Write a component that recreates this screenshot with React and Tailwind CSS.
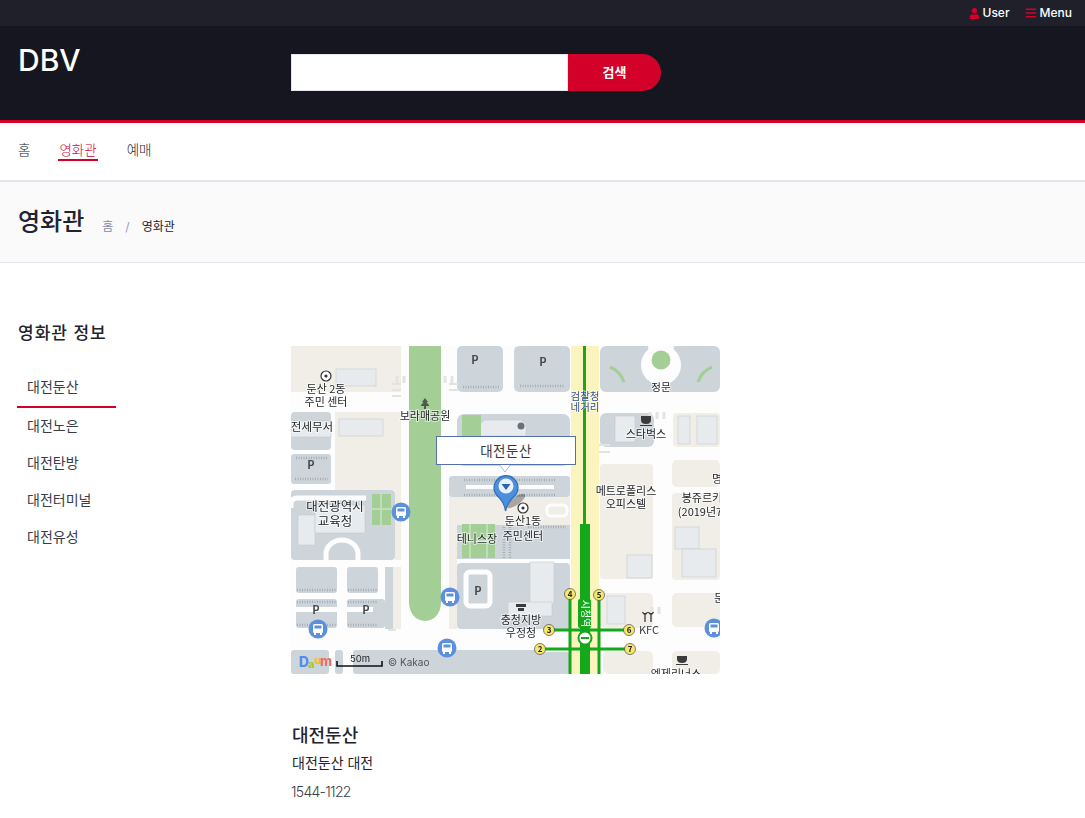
import React from "react";
import { FaUser, FaBars } from "react-icons/fa";

const beige = "#f1eee8";
const grey = "#cdd4da";
const lightGrey = "#e8ebee";
const road = "#fdfdfd";
const green = "#a3cf96";
const line = "#12a81c";

// [x, y, w, h, fill, rx]
const blocks = [
  // top row
  [291, 346, 110, 46, beige, 0],
  [457, 346, 46, 46, grey, 5],
  [514, 346, 56, 46, grey, 5],
  [600, 346, 120, 46, grey, 6],
  // left column
  [291, 412, 40, 38, grey, 4],
  [335, 412, 66, 78, beige, 0],
  [291, 454, 40, 30, grey, 3],
  [291, 490, 104, 70, grey, 4],
  [395, 490, 6, 70, beige, 0],
  [296, 567, 41, 26, grey, 3],
  [347, 567, 31, 26, grey, 3],
  [385, 567, 8, 62, grey, 0],
  [393, 567, 8, 62, beige, 0],
  [296, 599, 41, 29, grey, 3],
  [347, 599, 38, 29, grey, 3],
  [291, 650, 38, 24, grey, 3],
  [335, 650, 8, 24, grey, 3],
  [353, 650, 190, 24, grey, 3],
  // center
  [457, 414, 113, 52, grey, 7],
  [449, 476, 121, 21, grey, 3],
  [449, 497, 121, 28, beige, 0],
  [449, 525, 8, 104, beige, 0],
  [457, 525, 113, 34, grey, 0],
  [457, 563, 113, 66, grey, 4],
  // right blocks
  [600, 413, 54, 34, grey, 6],
  [673, 413, 47, 34, beige, 4],
  [600, 464, 53, 115, beige, 3],
  [672, 460, 48, 27, beige, 5],
  [672, 493, 48, 87, beige, 4],
  [600, 593, 53, 35, beige, 5],
  [672, 593, 48, 34, beige, 5],
  [603, 651, 50, 23, beige, 5],
  [672, 651, 48, 23, beige, 5],
  [521, 652, 49, 22, grey, 4],
];

// [x, y, w, h]
const lightRects = [
  [336, 369, 40, 17],
  [339, 419, 44, 17],
  [291, 421, 40, 16],
  [627, 555, 25, 23],
  [615, 416, 20, 26],
  [678, 416, 12, 28],
  [697, 416, 20, 28],
  [675, 527, 24, 22],
  [682, 549, 34, 28],
  [607, 596, 18, 28],
  [530, 562, 24, 42],
  [508, 602, 44, 14],
  [298, 515, 17, 30],
  [315, 505, 50, 28],
];

// dashed parking edges, [x1, y1, x2, y2]
const lotEdges = [
  [463, 387, 499, 387],
  [520, 386, 564, 386],
  [295, 479, 328, 479],
  [296, 458, 328, 458],
  [297, 590, 336, 590],
  [348, 590, 377, 590],
  [297, 602, 336, 602],
  [348, 602, 377, 602],
  [297, 625, 336, 625],
  [348, 625, 377, 625],
  [464, 480, 556, 480],
  [464, 495, 556, 495],
  [504, 527, 504, 558],
  [510, 527, 510, 558],
  [528, 527, 566, 527],
];

// [text, x, y, size]
const labels = [
  ["둔산 2동", 326, 393, 11],
  ["주민 센터", 326, 406, 11],
  ["보라매공원", 425, 420, 11],
  ["전세무서", 312, 431, 11.5],
  ["스타벅스", 646, 438, 11],
  ["정문", 661, 391, 10.5],
  ["메트로폴리스", 626, 495, 11],
  ["오피스텔", 626, 508, 11],
  ["봉쥬르키", 702, 502, 11],
  ["(2019년7", 700, 516, 11],
  ["대전광역시", 335, 511, 12.5],
  ["교육청", 335, 526, 12.5],
  ["테니스장", 477, 543, 11],
  ["둔산1동", 523, 525, 11],
  ["주민센터", 523, 540, 11],
  ["충청지방", 521, 624, 11],
  ["우정청", 521, 637, 11],
  ["엠제리너스", 676, 678, 11],
  ["명", 717, 483, 11],
  ["둔", 719, 602, 11],
];

const buses = [
  [401, 512],
  [318, 629],
  [450, 597],
  [447, 648],
  [714, 628],
];

const stops = [
  ["4", 570, 594],
  ["5", 599, 595],
  ["3", 549, 630],
  ["6", 629, 630],
  ["2", 540, 649],
  ["7", 630, 649],
];

const parking = [
  [475, 360],
  [543, 362],
  [311, 465],
  [316, 610],
  [366, 610],
  [478, 591],
];

const MapView = () => (
  <svg
    width="429"
    height="328"
    viewBox="291 346 429 328"
    className="block font-['Noto_Sans_CJK_KR',sans-serif]"
  >
    <defs>
      <filter id="tile" x="0" y="0" width="100%" height="100%">
        <feGaussianBlur stdDeviation="0.4" />
      </filter>
    </defs>
    <rect x="291" y="346" width="429" height="328" fill={road} />
    <g filter="url(#tile)">
      {blocks.map(([x, y, w, h, fill, rx], index) => (
        <rect key={index} x={x} y={y} width={w} height={h} fill={fill} rx={rx} />
      ))}
      {lightRects.map(([x, y, w, h], index) => (
        <rect
          key={index}
          x={x}
          y={y}
          width={w}
          height={h}
          fill={lightGrey}
          stroke="#c4c9cd"
          strokeWidth="0.6"
        />
      ))}
      {lotEdges.map(([x1, y1, x2, y2], index) => (
        <line
          key={index}
          x1={x1}
          y1={y1}
          x2={x2}
          y2={y2}
          stroke="#a5adb5"
          strokeWidth="2.5"
          strokeDasharray="1 1.5"
        />
      ))}

      {/* white paths cut into the blocks */}
      <path d="M291 508 v-4 q0 -6 7 -6 h68" fill="none" stroke={road} strokeWidth="5" />
      <path d="M326 560 v-6 a16 14 0 0 1 32 0 v6" fill={grey} stroke={road} strokeWidth="5" />
      <rect x="291" y="607" width="46" height="5" fill={road} />
      <rect x="347" y="607" width="26" height="5" fill={road} />
      <rect x="466" y="485" width="88" height="4" fill={road} />
      <rect x="547" y="505" width="20" height="11" rx="4" fill={beige} stroke={road} strokeWidth="3" />
      <rect x="466" y="572" width="24" height="34" rx="4" fill={grey} stroke={road} strokeWidth="5" />

      {/* building behind the info window */}
      <path d="M485 420 h36 l5 4 v12 h-46 v-12 z" fill={lightGrey} stroke="#c4c9cd" strokeWidth="0.6" />
      <circle cx="521" cy="426" r="3.5" fill="#6a7076" />

      {/* park and courts */}
      <path d="M409 346 h32 v258 q-2 16 -16 17 q-14 -1 -16 -17 z" fill={green} />
      <rect x="462" y="415" width="19" height="21" fill={green} />
      <rect x="372" y="494" width="19" height="31" fill={green} />
      <rect x="462" y="524" width="33" height="34" fill={green} />
      <path d="M470 524 v34 M487 524 v34 M462 541 h33" stroke="#c9e3c0" strokeWidth="1.5" />
      <path d="M381 494 v31 M372 509 h19" stroke="#c9e3c0" strokeWidth="1.5" />
      <circle cx="661" cy="365" r="20" fill={road} />
      <path d="M648 346 h26 l-6 46 h-14 z" fill={road} />
      <circle cx="661" cy="360" r="9.5" fill={green} />
      <path d="M610 367 q10 4 14 15 M712 367 q-10 4 -14 15" stroke={green} strokeWidth="3" fill="none" />

      {/* crosswalks */}
      <path
        d="M392 384 h9 M392 390 h9 M392 396 h9 M449 384 h9 M449 390 h9 M598 445 h12 M598 452 h12 M388 630 h8"
        stroke="#e3e3e0"
        strokeWidth="2"
      />
      <path
        d="M397 376 v7 M404 376 v7 M445 376 v7 M452 376 v7 M650 412 v7 M657 412 v7 M664 412 v7 M652 607 v7 M659 607 v7"
        stroke="#e3e3e0"
        strokeWidth="3"
      />

      {/* yellow road and subway */}
      <rect x="571" y="346" width="28" height="328" fill="#fbf5bd" />
      <rect x="583" y="346" width="3" height="180" fill={line} />
      <rect x="580" y="524" width="10" height="150" fill={line} />
      <path
        d="M570 594 V674 M599 595 V674 M549 630 H629 M540 649 H630"
        stroke={line}
        strokeWidth="3"
        fill="none"
      />
      <rect x="578" y="599" width="13" height="29" rx="2" fill={line} />
      <text
        x="584.5"
        y="613.5"
        fontSize="10"
        fill="#fff"
        textAnchor="middle"
        dominantBaseline="middle"
        transform="rotate(90 584.5 613.5)"
      >
        시청역
      </text>
      <circle cx="585" cy="638" r="6.5" fill="#fff" stroke={line} strokeWidth="2" />
      <rect x="581" y="637" width="8" height="2" fill={line} />
      {stops.map(([label, x, y]) => (
        <g key={label}>
          <circle cx={x} cy={y} r="5.5" fill="#f7e76a" stroke="#4a4a4a" strokeWidth="0.7" />
          <text x={x} y={y + 3} fontSize="8" fontWeight="700" textAnchor="middle" fill="#222">
            {label}
          </text>
        </g>
      ))}

      {/* parking letters */}
      {parking.map(([x, y], index) => (
        <text key={index} x={x} y={y + 4} fontSize="11" fontWeight="700" textAnchor="middle" fill="#4a4a4a">
          P
        </text>
      ))}

      {/* poi icons */}
      <circle cx="326" cy="376" r="5" fill="#fff" stroke="#333" strokeWidth="1.2" />
      <circle cx="326" cy="376" r="1.6" fill="#333" />
      <circle cx="523" cy="508" r="5" fill="#fff" stroke="#333" strokeWidth="1.2" />
      <circle cx="523" cy="508" r="1.6" fill="#333" />
      <path d="M425 398 l3 4 h-1.5 l3 4 h-9 l3 -4 h-1.5 z M424 406 h2 v3 h-2 z" fill="#4e5a4e" />
      <path d="M641 416 h10 v4 q0 4 -5 4 q-5 0 -5 -4 z M640 425 h12 v1 h-12 z" fill="#3a3a3a" />
      <path d="M645 613 v9 M651 613 v9 M642.5 612 q2.5 5 5 0 M648.5 612 q2.5 5 5 0" stroke="#3a3a3a" strokeWidth="1.3" fill="none" />
      <path d="M516 604 h10 v3 h-10 z M518 608 h6 v3 h-6 z" fill="#3a3a3a" />
      <path d="M677 656 h10 v3 q0 4 -5 4 q-5 0 -5 -4 z M676 664 h12 v1 h-12 z" fill="#3a3a3a" />

      {labels.map(([label, x, y, size]) => (
        <text
          key={label}
          x={x}
          y={y}
          fontSize={size}
          textAnchor="middle"
          fill="#23272b"
          stroke="#ffffff"
          strokeWidth="2"
          paintOrder="stroke"
          strokeOpacity="0.6"
        >
          {label}
        </text>
      ))}
      <text x="585" y="400" fontSize="10.5" textAnchor="middle" fill="#34509a" stroke="#fff" strokeWidth="1.5" paintOrder="stroke" strokeOpacity="0.6">
        검찰청
      </text>
      <text x="585" y="411" fontSize="10.5" textAnchor="middle" fill="#34509a" stroke="#fff" strokeWidth="1.5" paintOrder="stroke" strokeOpacity="0.6">
        네거리
      </text>
      <text x="649" y="634" fontSize="11" textAnchor="middle" fill="#3a3f44">
        KFC
      </text>

      {/* bus stops */}
      {buses.map(([x, y], index) => (
        <g key={index}>
          <circle cx={x} cy={y} r="9.5" fill="#5c90dc" />
          <rect x={x - 5} y={y - 5} width="10" height="9" rx="1.5" fill="#fff" />
          <rect x={x - 3.5} y={y - 3.5} width="7" height="3" fill="#5c90dc" />
          <rect x={x - 4} y={y + 4} width="2" height="2" fill="#fff" />
          <rect x={x + 2} y={y + 4} width="2" height="2" fill="#fff" />
        </g>
      ))}

      {/* logo and scale */}
      <text x="299" y="667" fontSize="14" fontWeight="800" fill="#4f8ef0" fontFamily="Inter">
        D
      </text>
      <text x="308" y="668" fontSize="11" fontWeight="800" fill="#a5cc1f" fontFamily="Inter">
        a
      </text>
      <text x="314" y="664" fontSize="11" fontWeight="800" fill="#f5bc1d" fontFamily="Inter">
        u
      </text>
      <text x="320" y="666" fontSize="13" fontWeight="800" fill="#ee6d63" fontFamily="Inter">
        m
      </text>
      <path d="M337 661 v5 h45 v-5" stroke="#111" strokeWidth="1.6" fill="none" />
      <text x="360" y="662" fontSize="9.5" textAnchor="middle" fill="#222" fontFamily="Inter">
        50m
      </text>
      <text x="388" y="666" fontSize="10" fill="#555" fontFamily="Inter">
        © Kakao
      </text>

      {/* marker */}
      <ellipse cx="516" cy="501" rx="11" ry="4" fill="#000" opacity="0.3" transform="rotate(-35 516 501)" />
      <path
        d="M505.5 511 q-1 -9 -9 -16 a12 12 0 1 1 19 0 q-8 7 -10 16 z"
        fill="#4b8fdd"
        stroke="#2f6cb8"
        strokeWidth="1.2"
      />
      <circle cx="506" cy="486" r="7.5" fill="#e9f1fb" />
      <path d="M501.5 484 h9 l-4.5 6 z" fill="#2f62ad" />
    </g>

    {/* info window */}
    <path d="M499 464 l6 8 l6 -8 z" fill="#fff" stroke="#8fa8d0" strokeWidth="0.8" />
    <rect x="436.5" y="436.5" width="139" height="28" fill="#fff" stroke="#5470ab" />
    <text x="506" y="456" fontSize="13.5" letterSpacing="0.5" textAnchor="middle" fill="#3a3a3a">
      대전둔산
    </text>
  </svg>
);

const sideItems = ["대전둔산", "대전노은", "대전탄방", "대전터미널", "대전유성"];

const App = () => {
  return (
    <div className="min-h-[818px] bg-white text-[#21232e] font-['Inter','Noto_Sans_CJK_KR',sans-serif]">
      {/* top bar */}
      <div className="h-[26px] bg-[#1f2029] flex items-center justify-end gap-[15px] pr-[13px] text-[12px] font-medium text-white">
        <span className="flex items-center gap-[3px]">
          <FaUser className="text-[#d3002a] text-[11px]" />
          User
        </span>
        <span className="flex items-center gap-[3px]">
          <FaBars className="text-[#d3002a] text-[12px]" />
          Menu
        </span>
      </div>

      {/* header */}
      <div className="h-[97px] bg-[#15161f] border-b-[3px] border-[#d3002a] flex pl-[18px]">
        <div className="w-[273px] pt-[16px] text-[30px] leading-[36px] font-medium text-white">DBV</div>
        <div className="flex h-[37px] mt-[28px]">
          <input className="w-[277px] h-full bg-white border border-[#e5e5ef] outline-none" />
          <button className="w-[93px] h-full bg-[#d3002a] rounded-r-full text-white text-[13px] font-bold">
            검색
          </button>
        </div>
      </div>

      {/* nav */}
      <div className="h-[59px] border-b-2 border-[#e3e4ec] flex gap-[29px] pl-[18px] text-[13.5px] font-light">
        <a className="pt-[17px]">홈</a>
        <a className="mt-[17px] h-[19px] leading-[20px] -mx-px px-px border-b-2 border-[#d3002a] text-[#d3002a] box-content">영화관</a>
        <a className="pt-[17px] ml-px">예매</a>
      </div>

      {/* title */}
      <div className="h-[81px] bg-[#fafafa] border-b border-[#e3e4ec] flex items-center pl-[18px]">
        <h1 className="text-[24px] font-medium mr-[18px]">영화관</h1>
        <div className="flex items-center text-[12px] pt-[9px]">
          <span className="text-[#7d8aa8]">홈</span>
          <span className="mx-[12px] text-[#8fa0bd]">/</span>
          <span>영화관</span>
        </div>
      </div>

      {/* content */}
      <div className="flex pt-[58px]">
        <div className="w-[291px] shrink-0 pl-[17px]">
          <h2 className="pl-px text-[17px] leading-[24px] font-medium tracking-[1px]">영화관 정보</h2>
          <ul className="mt-[23px] w-[99px] text-[14px] text-[#3a3c46]">
            {sideItems.map((item, index) => (
              <li
                key={item}
                className={
                  index === 0
                    ? "h-[29px] pl-[10px] pt-[9px] border-b-2 border-[#d3002a] box-content leading-[20px]"
                    : "h-[29px] pl-[10px] pt-[8px] box-content leading-[20px] whitespace-nowrap"
                }
              >
                {item}
              </li>
            ))}
          </ul>
        </div>
        <div className="flex-1 pt-[25px]">
          <MapView />
          <h3 className="mt-[50px] pl-px text-[18px] leading-[24px] font-medium">대전둔산</h3>
          <p className="mt-[5px] pl-px text-[14px] leading-[20px]">대전둔산 대전</p>
          <p className="mt-[9px] text-[14px] leading-[20px] font-light tracking-[-0.7px] text-[#3a3c46]">1544-1122</p>
        </div>
      </div>
    </div>
  );
};

export default App;
